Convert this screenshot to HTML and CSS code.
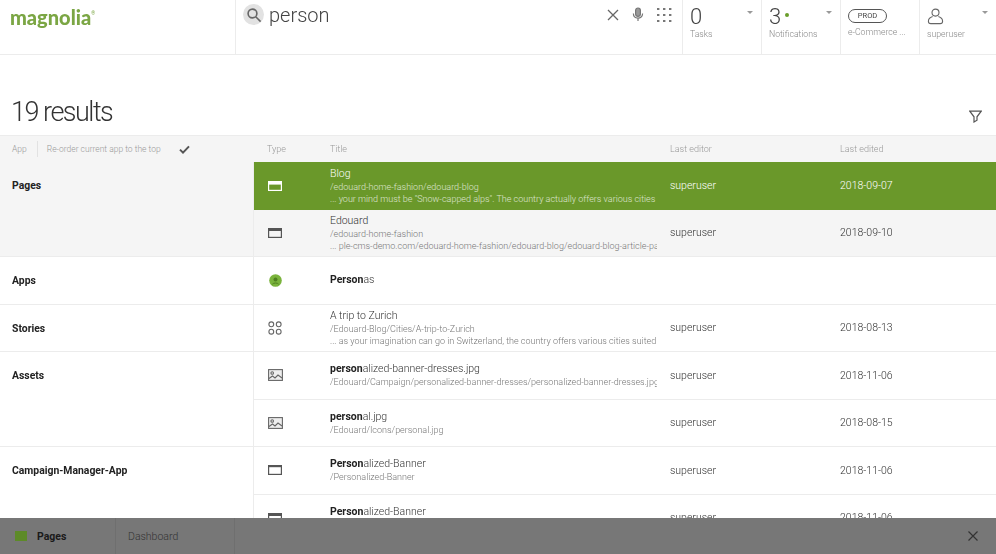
FILE: index.html
```html
<!DOCTYPE html>
<html lang="en">
	<head>
		<meta charset="UTF-8" />
		<title>magnolia search</title>
		<link rel="stylesheet" href="styles.css">
	</head>
	<body>
		<div class="page">
			<!-- top bar -->
			<div class="topbar">
				<div class="logo-cell"><span class="logo">magnolia</span><span class="logo-reg">®</span></div>
				<div class="search-cell">
					<div class="search-btn">
						<svg width="16" height="16" viewBox="0 0 16 16" fill="none" stroke="#666" stroke-width="1.6"><circle cx="6.5" cy="6.5" r="4.4"/><path d="M10 10l4.6 4.6"/></svg>
					</div>
					<div class="search-text">person</div>
					<div class="search-tools">
						<svg width="12" height="12" viewBox="0 0 12 12" fill="none" stroke="#666" stroke-width="1.3"><path d="M1 1l10 10M11 1L1 11"/></svg>
						<svg width="12" height="15" viewBox="0 0 12 15" fill="none" stroke="#777" stroke-width="1.2"><rect x="3.6" y="1" width="4.8" height="8.4" rx="2.4" fill="#999"/><path d="M1.4 6.6c0 6 9.2 6 9.2 0M6 11.6V14"/></svg>
						<svg width="15" height="14" viewBox="0 0 15 14" fill="#777"><rect x="0" y="0" width="2.4" height="2"/><rect x="6" y="0" width="2.4" height="2"/><rect x="12" y="0" width="2.4" height="2"/><rect x="0" y="6" width="2.4" height="2"/><rect x="6" y="6" width="2.4" height="2"/><rect x="12" y="6" width="2.4" height="2"/><rect x="0" y="12" width="2.4" height="2"/><rect x="6" y="12" width="2.4" height="2"/><rect x="12" y="12" width="2.4" height="2"/></svg>
					</div>
				</div>
				<div class="status-cell">
					<div class="status-big">0</div>
					<div class="status-label">Tasks</div>
					<span class="caret"></span>
				</div>
				<div class="status-cell">
					<div class="status-big">3<span class="dot"></span></div>
					<div class="status-label">Notifications</div>
					<span class="caret"></span>
				</div>
				<div class="status-cell">
					<div class="pill">PROD</div>
					<div class="status-label">e-Commerce ...</div>
				</div>
				<div class="status-cell">
					<svg class="user-icon" width="17" height="17" viewBox="0 0 17 17" fill="none" stroke="#666" stroke-width="1.1"><circle cx="8.5" cy="4.6" r="3.5"/><path d="M5.6 8.6C2.6 9.6 1.4 11.4 1.4 13.2c0 1.6 1 2.4 2.4 2.4h9.4c1.4 0 2.4-.8 2.4-2.4 0-1.8-1.2-3.6-4.2-4.6"/></svg>
					<div class="status-label">superuser</div>
					<span class="caret"></span>
				</div>
			</div>

			<div class="summary">
				<div class="count">19 results</div>
				<svg width="13" height="13" viewBox="0 0 13 13" fill="none" stroke="#555" stroke-width="1.2"><path d="M.8 1.2h11.4L8 6.8v3.4l-3 1.8V6.800z"/></svg>
			</div>

			<!-- table header -->
			<div class="table-head">
				<div class="head-left">
					<span>App</span>
					<span class="head-sep"></span>
					<span>Re-order current app to the top</span>
					<svg class="check" width="11" height="9" viewBox="0 0 11 9" fill="none" stroke="#555" stroke-width="2"><path d="M1 4.600l3 3L10 1.400"/></svg>
				</div>
				<div class="head-type">Type</div>
				<div class="head-title">Title</div>
				<div class="head-editor">Last editor</div>
				<div class="head-date">Last edited</div>
			</div>

			<div class="results">
				<div class="group group-grey">
					<div class="group-name">Pages</div>
					<div class="rows">
						<div class="row selected">
							<div class="row-icon"><svg class="ico" width="14" height="10" viewBox="0 0 14 10"><rect x=".6" y=".6" width="12.800" height="8.800"/><rect class="fill" x=".6" y=".6" width="12.800" height="2.400"/></svg></div>
							<div class="row-title">
								<div class="t">Blog</div>
								<div class="p">/edouard-home-fashion/edouard-blog</div>
								<div class="p">... your mind must be "Snow-capped alps". The country actually offers various cities suited for</div>
							</div>
							<div class="row-editor">superuser</div>
							<div class="row-date">2018-09-07</div>
						</div>
						<div class="row shaded">
							<div class="row-icon"><svg class="ico" width="14" height="10" viewBox="0 0 14 10"><rect x=".6" y=".6" width="12.800" height="8.800"/><rect class="fill" x=".6" y=".6" width="12.800" height="2.400"/></svg></div>
							<div class="row-title">
								<div class="t">Edouard</div>
								<div class="p">/edouard-home-fashion</div>
								<div class="p">... ple-cms-demo.com/edouard-home-fashion/edouard-blog/edouard-blog-article-page</div>
							</div>
							<div class="row-editor">superuser</div>
							<div class="row-date">2018-09-10</div>
						</div>
					</div>
				</div>
				<div class="group">
					<div class="group-name">Apps</div>
					<div class="rows">
						<div class="row">
							<div class="row-icon"><svg width="13" height="13" viewBox="0 0 13 13"><circle cx="6.500" cy="6.500" r="6.300" fill="#7ab33c"/><circle cx="6.500" cy="5.400" r="2" fill="#4f7f20"/><path d="M3.400 10.200c1-1.600 5.200-1.600 6.200 0" stroke="#4f7f20" fill="none"/></svg></div>
							<div class="row-title single"><div class="t"><b>Person</b>as</div></div>
							<div class="row-editor"></div>
							<div class="row-date"></div>
						</div>
					</div>
				</div>
				<div class="group">
					<div class="group-name">Stories</div>
					<div class="rows">
						<div class="row">
							<div class="row-icon"><svg width="14" height="14" viewBox="0 0 14 14" fill="none" stroke="#666" stroke-width="1.100"><circle cx="3.300" cy="3.300" r="2.400"/><circle cx="10.700" cy="3.300" r="2.400"/><circle cx="3.300" cy="10.700" r="2.400"/><circle cx="10.700" cy="10.700" r="2.400"/></svg></div>
							<div class="row-title">
								<div class="t">A trip to Zurich</div>
								<div class="p">/Edouard-Blog/Cities/A-trip-to-Zurich</div>
								<div class="p">... as your imagination can go in Switzerland, the country offers various cities suited for</div>
							</div>
							<div class="row-editor">superuser</div>
							<div class="row-date">2018-08-13</div>
						</div>
					</div>
				</div>
				<div class="group">
					<div class="group-name">Assets</div>
					<div class="rows">
						<div class="row">
							<div class="row-icon"><svg class="ico-img" width="15" height="12" viewBox="0 0 15 12"><rect x=".6" y=".6" width="13.800" height="10.800"/><circle cx="4.200" cy="4" r="1.300"/><path d="M1 9.500l3.500-2.500 2.500 2 3-3 4 3"/></svg></div>
							<div class="row-title two">
								<div class="t"><b>person</b>alized-banner-dresses.jpg</div>
								<div class="p">/Edouard/Campaign/personalized-banner-dresses/personalized-banner-dresses.jpg</div>
							</div>
							<div class="row-editor">superuser</div>
							<div class="row-date">2018-11-06</div>
						</div>
						<div class="row">
							<div class="row-icon"><svg class="ico-img" width="15" height="12" viewBox="0 0 15 12"><rect x=".6" y=".6" width="13.800" height="10.800"/><circle cx="4.200" cy="4" r="1.300"/><path d="M1 9.500l3.500-2.500 2.500 2 3-3 4 3"/></svg></div>
							<div class="row-title two">
								<div class="t"><b>person</b>al.jpg</div>
								<div class="p">/Edouard/Icons/personal.jpg</div>
							</div>
							<div class="row-editor">superuser</div>
							<div class="row-date">2018-08-15</div>
						</div>
					</div>
				</div>
				<div class="group">
					<div class="group-name">Campaign-Manager-App</div>
					<div class="rows">
						<div class="row">
							<div class="row-icon"><svg class="ico" width="14" height="10" viewBox="0 0 14 10"><rect x=".6" y=".6" width="12.800" height="8.800"/><rect class="fill" x=".6" y=".6" width="12.800" height="1.600"/></svg></div>
							<div class="row-title two">
								<div class="t"><b>Person</b>alized-Banner</div>
								<div class="p">/Personalized-Banner</div>
							</div>
							<div class="row-editor">superuser</div>
							<div class="row-date">2018-11-06</div>
						</div>
						<div class="row">
							<div class="row-icon"><svg class="ico" width="14" height="10" viewBox="0 0 14 10"><rect x=".6" y=".6" width="12.800" height="8.800"/><rect class="fill" x=".6" y=".6" width="12.800" height="2.400"/></svg></div>
							<div class="row-title two">
								<div class="t"><b>Person</b>alized-Banner</div>
								<div class="p">/Personalized-Banner</div>
							</div>
							<div class="row-editor">superuser</div>
							<div class="row-date">2018-11-06</div>
						</div>
					</div>
				</div>
			</div>

			<!-- running apps bar -->
			<div class="appbar">
				<div class="app-tab app-current">
					<span class="app-square"></span>
					<span>Pages</span>
				</div>
				<div class="app-tab app-other">Dashboard</div>
				<div class="app-rest">
					<svg width="10" height="10" viewBox="0 0 10 10" fill="none" stroke="#333" stroke-width="1.200"><path d="M.5.5l9 9M9.500.5l-9 9"/></svg>
				</div>
			</div>
		</div>
	</body>
</html>
```
FILE: styles.css
```css
body,
html {
	height: 100%;
	margin: 0;
	background-color: #fff;
	font-family: Roboto, "Liberation Sans", sans-serif;
	color: #555;
}

.page {
	display: flex;
	flex-direction: column;
	height: 554px;
	overflow: hidden;
	/* the whole shot is soft */
	filter: blur(0.6px);
}

/* top bar */
.topbar {
	display: flex;
	flex: none;
	height: 54px;
	border-bottom: 1px solid #ececec;
}

.logo-cell {
	display: flex;
	align-items: flex-start;
	width: 236px;
	padding: 5px 0 0 10px;
	box-sizing: border-box;
	border-right: 1px solid #ececec;
}

.logo {
	font-family: Lato, sans-serif;
	font-weight: 900;
	font-size: 20px;
	line-height: 24px;
	color: #7ba644;
}

.logo-reg {
	font-size: 5px;
	line-height: 16px;
	color: #7ba644;
}

.search-cell {
	display: flex;
	align-items: flex-start;
	width: 446px;
	box-sizing: border-box;
	padding: 4px 10px 0 7px;
}

.search-btn {
	display: flex;
	justify-content: center;
	align-items: center;
	width: 21px;
	height: 21px;
	border-radius: 50%;
	background-color: #e2e2e2;
}

.search-text {
	margin-left: 5px;
	font-weight: 300;
	font-size: 20px;
	line-height: 22px;
	color: #444;
}

.search-tools {
	display: flex;
	align-items: center;
	gap: 13px;
	margin-left: auto;
	padding-top: 3px;
}

.status-cell {
	position: relative;
	width: 79px;
	box-sizing: border-box;
	padding: 7px 0 0 7px;
	border-left: 1px solid #ececec;
}

.status-cell:last-child {
	width: 77px;
}

.status-big {
	display: flex;
	font-weight: 300;
	font-size: 22px;
	line-height: 20px;
	color: #444;
}

.dot {
	width: 4px;
	height: 4px;
	margin: 6px 0 0 4px;
	border-radius: 50%;
	background-color: #6a9e2b;
}

.status-label {
	margin-top: 2px;
	font-weight: 300;
	font-size: 8.7px;
	line-height: 10px;
	color: #888;
	white-space: nowrap;
}

.caret {
	position: absolute;
	top: 11px;
	right: 8px;
	border-left: 3px solid transparent;
	border-right: 3px solid transparent;
	border-top: 3px solid #999;
}

.pill {
	width: 39px;
	height: 14px;
	margin-top: 2px;
	margin-bottom: 4px;
	border: 1px solid #555;
	border-radius: 8px;
	box-sizing: border-box;
	text-align: center;
	font-size: 7.5px;
	line-height: 12px;
	color: #444;
}

.user-icon {
	display: block;
	margin-top: 1px;
	margin-bottom: 4px;
}

/* result count */
.summary {
	display: flex;
	flex: none;
	justify-content: space-between;
	align-items: flex-end;
	height: 80px;
	box-sizing: border-box;
	padding: 0 14px 12px 11px;
}

.count {
	font-weight: 300;
	font-size: 27px;
	line-height: 32px;
	letter-spacing: -1.5px;
	color: #333;
	margin-bottom: -5px;
}

/* table */
.table-head {
	display: flex;
	flex: none;
	align-items: center;
	height: 27px;
	border-top: 1px solid #ececec;
	box-sizing: border-box;
	background-color: #f5f5f5;
	font-weight: 300;
	font-size: 9px;
	color: #999;
}

.head-left {
	display: flex;
	align-items: center;
	width: 267px;
	padding-left: 12px;
	box-sizing: border-box;
	font-size: 8.5px;
}

.head-sep {
	width: 1px;
	height: 16px;
	margin: 0 9px 0 10px;
	background-color: #e2e2e2;
}

.check {
	margin-left: 18px;
}

.head-type {
	width: 63px;
}

.head-title {
	width: 340px;
}

.head-editor {
	width: 170px;
}

.results {
	flex: 1;
	overflow: hidden;
}

.group {
	display: flex;
}

.group-name {
	flex: none;
	width: 254px;
	box-sizing: border-box;
	padding: 18px 0 0 12px;
	font-weight: 700;
	font-size: 10.4px;
	line-height: 12px;
	color: #222;
	border-bottom: 1px solid #ececec;
	border-right: 1px solid #ececec;
}

.group-grey .group-name {
	background-color: #f5f5f5;
}

.rows {
	flex: 1;
	min-width: 0;
}

.row {
	display: flex;
	align-items: center;
	height: 47.5px;
	box-sizing: border-box;
	border-bottom: 1px solid #ececec;
}

.row.shaded {
	background-color: #f5f5f5;
}

.row.selected {
	background-color: #6a982a;
	color: #fff;
	border-bottom: none;
}

.row-icon {
	display: flex;
	flex: none;
	justify-content: center;
	align-items: center;
	width: 42px;
	margin-right: 34px;
}

.ico rect {
	fill: none;
	stroke: #555;
	stroke-width: 1.2;
}

.ico rect.fill {
	fill: #555;
	stroke: none;
}

.selected .ico rect {
	stroke: #fff;
}

.selected .ico rect.fill {
	fill: #fff;
}

.ico-img {
	fill: #eee;
	stroke: #666;
	stroke-width: 1.1;
}

.row-title {
	flex: none;
	width: 327px;
	margin-right: 13px;
	overflow: hidden;
	white-space: nowrap;
}

.row-title .t {
	font-weight: 300;
	font-size: 10.5px;
	line-height: 14px;
	color: #333;
}

.row-title .t b {
	font-weight: 700;
	color: #222;
}

.row-title .p {
	font-weight: 300;
	font-size: 9px;
	line-height: 12px;
	color: #777;
}

.selected .row-title .t,
.selected .row-title .p {
	color: #fff;
}

.selected .row-title .p {
	opacity: 0.75;
}

.row-editor {
	flex: none;
	width: 170px;
	font-weight: 300;
	font-size: 10.5px;
	color: #333;
}

.row-date {
	font-weight: 300;
	font-size: 10.5px;
	color: #333;
}

.selected .row-editor,
.selected .row-date {
	color: #fff;
}

/* bottom bar */
.appbar {
	display: flex;
	flex: none;
	height: 36px;
	background-color: #777;
	font-size: 10.5px;
}

.app-tab {
	display: flex;
	align-items: center;
	box-sizing: border-box;
}

.app-current {
	width: 116px;
	padding-left: 15px;
	gap: 10px;
	font-weight: 700;
	color: #1a1a1a;
	border-right: 1px solid #6f6f6f;
}

.app-square {
	width: 12px;
	height: 10px;
	background-color: #5d8a28;
}

.app-other {
	width: 119px;
	padding-left: 12px;
	font-weight: 300;
	color: #333;
	border-right: 1px solid #6f6f6f;
}

.app-rest {
	display: flex;
	flex: 1;
	justify-content: flex-end;
	align-items: center;
	padding-right: 18px;
}
```
